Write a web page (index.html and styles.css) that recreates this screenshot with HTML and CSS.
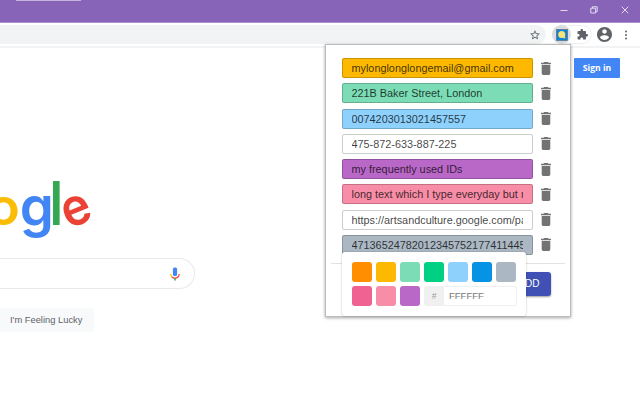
FILE: index.html
```html
<!DOCTYPE html>
<html lang="en">
<head>
<meta charset="utf-8">
<title>Google</title>
<link rel="stylesheet" href="styles.css">
</head>
<body>
<div class="browser">
  <header class="titlebar">
    <div class="tab-edge"></div>
    <div class="window-controls">
      <svg width="8" height="8" viewBox="0 0 8 8"><path d="M.5 4.5h7"/></svg>
      <svg width="8" height="8" viewBox="0 0 8 8"><path d="M.8 2.2h4.8v4.8H.8zM2.4 2.2V.8h4.8v4.8H5.6"/></svg>
      <svg width="8" height="8" viewBox="0 0 8 8"><path d="M.7.7l6.6 6.6M7.3.7L.7 7.3"/></svg>
    </div>
  </header>
  <div class="toolbar">
    <div class="omnibox">
      <svg width="10" height="10" viewBox="2 2 20 20"><path fill="#5f6368" d="M22 9.24l-7.19-.62L12 2 9.19 8.63 2 9.24l5.46 4.73L5.82 21 12 17.27 18.18 21l-1.63-7.03L22 9.24zM12 15.4l-3.76 2.27 1-4.28-3.32-2.88 4.38-.38L12 6.1l1.71 4.04 4.38.38-3.32 2.88 1 4.28L12 15.4z"/></svg>
    </div>
    <div class="extensions">
      <span class="ext-active">
        <svg width="12" height="12" viewBox="0 0 12 12"><rect x=".5" y=".5" width="11" height="11" fill="#0b84d8" stroke="#52636e" stroke-width=".6"/><path d="M7.200 7.200l1.800 1.800" stroke="#f3d66a" stroke-width="2"/><circle cx="5.700" cy="5.500" r="3.500" fill="#fbe27a"/></svg>
      </span>
      <svg class="puzzle" width="11" height="11" viewBox="1 1 22 22"><path fill="#5f6368" d="M20.500 11H19V7c0-1.100-.9-2-2-2h-4V3.500C13 2.120 11.880 1 10.500 1S8 2.120 8 3.500V5H4c-1.100 0-1.990.9-1.990 2v3.800H3.500c1.490 0 2.700 1.210 2.700 2.700s-1.210 2.700-2.700 2.700H2V20c0 1.100.9 2 2 2h3.800v-1.500c0-1.490 1.210-2.700 2.700-2.700s2.700 1.210 2.700 2.700V22H17c1.100 0 2-.9 2-2v-4h1.500c1.380 0 2.500-1.120 2.500-2.500S21.880 11 20.500 11z"/></svg>
    </div>
    <svg class="avatar" width="15" height="15" viewBox="2 2 20 20"><path fill="#5f6368" d="M12 2C6.480 2 2 6.480 2 12s4.480 10 10 10 10-4.480 10-10S17.520 2 12 2zm0 3c1.660 0 3 1.340 3 3s-1.340 3-3 3-3-1.340-3-3 1.340-3 3-3zm0 14.200c-2.500 0-4.710-1.280-6-3.220.03-1.990 4-3.080 6-3.080 1.990 0 5.970 1.090 6 3.080-1.290 1.940-3.500 3.220-6 3.220z"/></svg>
    <svg class="kebab" width="4" height="10" viewBox="0 0 4 10"><g fill="#5f6368"><circle cx="2" cy="1.500" r="1"/><circle cx="2" cy="5" r="1"/><circle cx="2" cy="8.500" r="1"/></g></svg>
  </div>
  <main class="page">
    <a class="sign-in">Sign in</a>
    <div class="logo"><span class="o">o</span><span class="g">g</span><span class="l">l</span><span class="e">e</span></div>
    <div class="search">
      <svg width="10" height="14" viewBox="0 0 10 14"><rect x="2.900" y=".5" width="4.200" height="8.600" rx="1.600" fill="#4285f4"/><g fill="none" stroke-width="1.200"><path d="M.8 6.900C.8 8.300 1.300 9.300 2 10" stroke="#fbbc05"/><path d="M2 10c1.600 1.600 4.400 1.600 6 0 .7-.7 1.200-1.700 1.200-3.100" stroke="#ea4335"/><path d="M5 11.300v2.300" stroke="#34a853" stroke-width="1.500"/></g></svg>
    </div>
    <button class="lucky">I'm Feeling Lucky</button>
  </main>
</div>

<svg class="defs" width="0" height="0"><symbol id="trash" viewBox="5 3 14 18" preserveAspectRatio="none"><path d="M6 19c0 1.100.9 2 2 2h8c1.100 0 2-.9 2-2V7H6v12zM19 4h-3.500l-1-1h-5l-1 1H5v2h14V4z"/></symbol></svg>

<section class="popup">
  <ul class="entries">
    <li><div class="field amber"><span>mylonglonglongemail@gmail.com</span></div><svg class="trash"><use href="#trash"/></svg></li>
    <li><div class="field mint"><span>221B Baker Street, London</span></div><svg class="trash"><use href="#trash"/></svg></li>
    <li><div class="field sky"><span>0074203013021457557</span></div><svg class="trash"><use href="#trash"/></svg></li>
    <li><div class="field"><span>475-872-633-887-225</span></div><svg class="trash"><use href="#trash"/></svg></li>
    <li><div class="field purple"><span>my frequently used IDs</span></div><svg class="trash"><use href="#trash"/></svg></li>
    <li><div class="field pink"><span>long text which I type everyday but not</span></div><svg class="trash"><use href="#trash"/></svg></li>
    <li><div class="field"><span>https://artsandculture.google.com/partner</span></div><svg class="trash"><use href="#trash"/></svg></li>
    <li><div class="field slate"><span>47136524782012345752177411445</span></div><svg class="trash"><use href="#trash"/></svg></li>
  </ul>
  <div class="actions"><button class="add">ADD</button></div>
  <div class="picker">
    <i class="swatch orange"></i><i class="swatch amber"></i><i class="swatch mint"></i><i class="swatch green"></i><i class="swatch sky"></i><i class="swatch blue"></i><i class="swatch slate"></i>
    <i class="swatch rose"></i><i class="swatch pink"></i><i class="swatch purple"></i>
    <div class="hex"><span class="hash">#</span><span class="value">FFFFFF</span></div>
  </div>
</section>
</body>
</html>
```
FILE: styles.css
```css
* { box-sizing: border-box; }
body {
  margin: 0;
  width: 640px;
  height: 400px;
  overflow: hidden;
  background: #fff;
  font-family: "Liberation Sans", Arial, sans-serif;
}
svg { display: block; flex: none; }
.defs { position: absolute; }

.titlebar {
  height: 23px;
  display: flex;
  justify-content: space-between;
  background: #8764b8;
  border-bottom: 1px solid #ab92cf;
}
.tab-edge { width: 65px; height: 1px; margin-left: 16px; background: #c3b5dc; }
.window-controls { display: flex; gap: 22.5px; padding: 5.500px 11.500px 0 0; }
.window-controls path { fill: none; stroke: #eee8f6; stroke-width: .9; }

.toolbar {
  height: 25px;
  display: flex;
  align-items: flex-start;
  padding-top: 2px;
  border-bottom: 2px solid #f1f3f4;
}
.omnibox {
  width: 546px;
  height: 19px;
  display: flex;
  align-items: center;
  justify-content: flex-end;
  padding-right: 6.500px;
  background: #f1f3f4;
  border-radius: 0 10px 10px 0;
}
.extensions {
  width: 40px;
  height: 19px;
  margin-left: 6px;
  display: flex;
  align-items: center;
  border: 1px solid #eceef0;
  border-radius: 10px;
}
.ext-active {
  width: 19px;
  height: 19px;
  margin-left: -1px;
  display: grid;
  place-items: center;
  background: #dadce0;
  border-radius: 50%;
}
.puzzle { margin-left: 6px; }
.avatar { margin: 2px 0 0 4.500px; }
.kebab { margin: 5px 0 0 12.500px; }

.page { display: flex; flex-direction: column; align-items: flex-start; }
.sign-in {
  align-self: flex-end;
  width: 46px;
  height: 20px;
  margin: 10px 20px 0 0;
  border-radius: 1px;
  background: #4285f4;
  color: #fff;
  font: bold 8.600px/20px "Open Sans", sans-serif;
  text-align: center;
}
.logo {
  height: 80px;
  margin: 89px 0 0 -15px;
  display: flex;
  font: 600 52px/80px Inter, sans-serif;
}
.logo span { display: block; text-align: center; }
.logo .o { width: 35px; color: #fbbc05; transform: translateX(1px) scaleX(1.04); }
.logo .g { width: 32px; color: #4285f4; transform: translateX(.5px) scale(1.05, 1.06); transform-origin: 50% 47px; }
.logo .l { width: 9px; color: #34a853; text-indent: -2.500px; transform: scaleY(1.16); transform-origin: 50% 59px; }
.logo .e { width: 30px; color: #ea4335; transform: rotate(-22deg) scaleX(.94); transform-origin: 50% 44px; }
.search {
  width: 195px;
  height: 31px;
  margin-top: 11px;
  padding-right: 14px;
  display: flex;
  align-items: center;
  justify-content: flex-end;
  border: 1px solid #e8e9eb;
  border-left: 0;
  border-radius: 0 16px 16px 0;
}
.lucky {
  width: 94px;
  height: 24px;
  margin-top: 19px;
  padding: 0 0 0 10px;
  border: 0;
  border-radius: 0 2px 2px 0;
  background: #f8f9fa;
  color: #5f6368;
  font: 9.350px/25px "Liberation Sans", sans-serif;
  text-align: left;
  white-space: nowrap;
}

.popup {
  position: absolute;
  left: 325px;
  top: 44px;
  width: 246px;
  height: 273px;
  padding: 13px 5px 0;
  background: #fff;
  border: 1px solid #bcbcbc;
  box-shadow: 0 1px 3px rgba(0, 0, 0, .35);
}
.entries {
  margin: 0;
  padding: 0 0 8.300px 11px;
  display: flex;
  flex-direction: column;
  gap: 5.250px;
  list-style: none;
  border-bottom: 1px solid #e2e2e2;
}
.entries li { display: flex; align-items: center; gap: 8px; }
.field {
  width: 191px;
  height: 20px;
  padding: 0 9px 0 8.500px;
  border: 1px solid rgba(0, 0, 0, .2);
  border-radius: 2px;
  color: rgba(0, 0, 0, .75);
  font-size: 10.850px;
  line-height: 18px;
}
.field span { display: block; overflow: hidden; white-space: nowrap; }
.trash { width: 10px; height: 13px; fill: #737373; }

.orange { background: #ff8f00; }
.amber { background: #fcb900; }
.mint { background: #7bdcb5; }
.green { background: #00d084; }
.sky { background: #8ed1fc; }
.blue { background: #0693e3; }
.slate { background: #abb8c3; }
.rose { background: #f06292; }
.pink { background: #f78da7; }
.purple { background: #ba68c8; }

.actions { display: flex; justify-content: flex-end; padding: 8px 14.500px 0 0; }
.add {
  width: 42px;
  height: 24px;
  padding: 0 11px 0 0;
  border: 0;
  border-radius: 3px;
  background: #3f51b5;
  box-shadow: 0 1px 2px rgba(0, 0, 0, .4);
  color: #fff;
  font: 10px/24px "Liberation Sans", sans-serif;
  text-align: right;
}
.picker {
  position: absolute;
  left: 16px;
  top: 207px;
  width: 184px;
  height: 64px;
  padding: 10px 9px 10px 10px;
  display: flex;
  flex-wrap: wrap;
  align-content: flex-start;
  gap: 4px;
  background: #fff;
  border-radius: 3px;
  box-shadow: 0 0 2px rgba(0, 0, 0, .3);
}
.swatch { width: 20px; height: 20px; border-radius: 3px; }
.hex {
  width: 93px;
  height: 20px;
  display: flex;
  border-radius: 3px;
  box-shadow: inset 0 0 0 1px #f0f0f0;
  font-size: 9.500px;
  line-height: 20px;
}
.hash { width: 20px; border-radius: 3px 0 0 3px; background: #f0f0f0; color: #98a1a4; font-size: 8.500px; text-align: center; }
.value { padding-left: 5px; color: #777; }
```
